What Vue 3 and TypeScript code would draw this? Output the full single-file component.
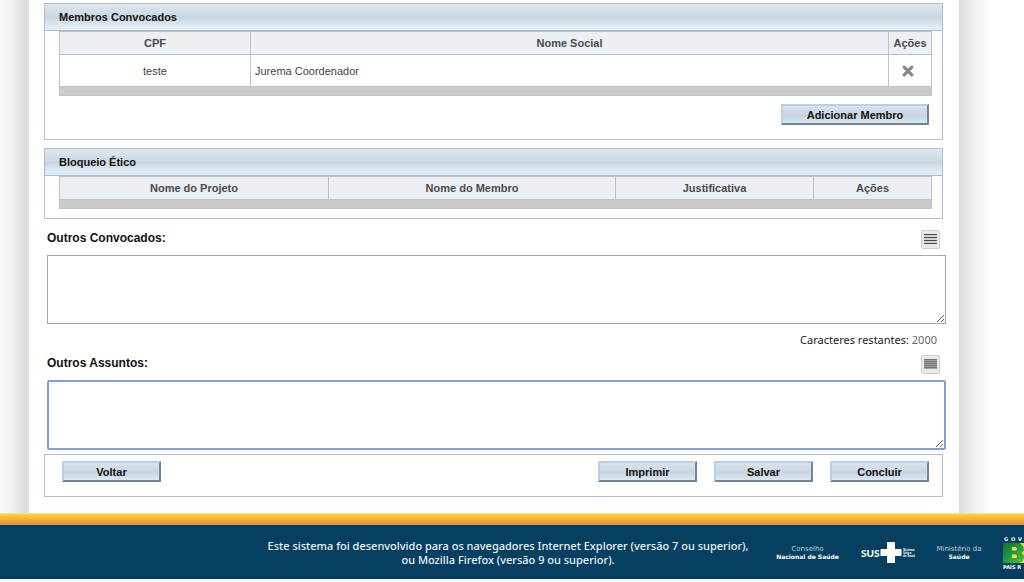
<script setup lang="ts">
import { ref } from 'vue'

interface Member {
  cpf: string
  name: string
}

const members = ref<Member[]>([{ cpf: 'teste', name: 'Jurema Coordenador' }])
const others = ref('')
const subjects = ref('')
const limit = 2000

function removeMember(index: number): void {
  members.value.splice(index, 1)
}
</script>

<template>
  <div class="screen">
    <div class="body-row">
      <div class="edge edge-left"></div>
      <main class="page">
        <section class="panel">
          <h2 class="panel-title">Membros Convocados</h2>
          <div class="panel-body members-body">
            <table class="grid">
              <colgroup>
                <col class="c-cpf" />
                <col />
                <col class="c-act" />
              </colgroup>
              <thead>
                <tr>
                  <th scope="col">CPF</th>
                  <th scope="col">Nome Social</th>
                  <th scope="col">Ações</th>
                </tr>
              </thead>
              <tbody>
                <tr v-for="(m, i) in members" :key="m.cpf">
                  <td class="center">{{ m.cpf }}</td>
                  <td>{{ m.name }}</td>
                  <td class="remove-cell">
                    <button class="remove" type="button" aria-label="Remover" @click="removeMember(i)">
                      <svg width="12" height="12" viewBox="0 0 12 12">
                        <path d="M2.2 2.2 L9.8 9.8 M9.8 2.2 L2.2 9.8" stroke="#858585" stroke-width="3.2" stroke-linecap="round" />
                      </svg>
                    </button>
                  </td>
                </tr>
              </tbody>
              <tfoot>
                <tr><td colspan="3"></td></tr>
              </tfoot>
            </table>
            <div class="panel-actions">
              <button class="btn wide" type="button">Adicionar Membro</button>
            </div>
          </div>
        </section>

        <section class="panel">
          <h2 class="panel-title">Bloqueio Ético</h2>
          <div class="panel-body ethics-body">
            <table class="grid">
              <colgroup>
                <col class="c-proj" />
                <col />
                <col class="c-just" />
                <col class="c-lock" />
              </colgroup>
              <thead>
                <tr>
                  <th scope="col">Nome do Projeto</th>
                  <th scope="col">Nome do Membro</th>
                  <th scope="col">Justificativa</th>
                  <th scope="col">Ações</th>
                </tr>
              </thead>
              <tfoot>
                <tr><td colspan="4"></td></tr>
              </tfoot>
            </table>
          </div>
        </section>

        <div class="field">
          <div class="field-head">
            <label for="others">Outros Convocados:</label>
            <button class="expand" type="button" aria-label="Expandir">
              <svg width="13" height="10" viewBox="0 0 13 10">
                <path d="M0 .5H13M0 3.5H13M0 6.5H13M0 9.5H13" stroke="#484848" />
                <path d="M0 2H13M0 5H13M0 8H13" stroke="#bdbdbd" />
              </svg>
            </button>
          </div>
          <textarea id="others" v-model="others" :maxlength="limit"></textarea>
          <p class="counter">Caracteres restantes: <span>{{ limit - others.length }}</span></p>
        </div>

        <div class="field">
          <div class="field-head">
            <label for="subjects">Outros Assuntos:</label>
            <button class="expand" type="button" aria-label="Expandir">
              <svg width="13" height="10" viewBox="0 0 13 10">
                <rect width="13" height="10" fill="#a5a5a5" />
                <path d="M0 .5H13M0 2.5H13M0 4.5H13M0 6.5H13M0 8.5H13" stroke="#717171" />
              </svg>
            </button>
          </div>
          <textarea id="subjects" v-model="subjects" class="active" :maxlength="limit"></textarea>
        </div>

        <div class="actions">
          <button class="btn back" type="button">Voltar</button>
          <button class="btn" type="button">Imprimir</button>
          <button class="btn" type="button">Salvar</button>
          <button class="btn" type="button">Concluir</button>
        </div>
      </main>
      <div class="edge edge-right"></div>
    </div>

    <div class="stripe"></div>
    <footer class="footer">
      <p class="notice">
        Este sistema foi desenvolvido para os navegadores Internet Explorer (versão 7 ou superior),<br />
        ou Mozilla Firefox (versão 9 ou superior).
      </p>
      <div class="logos">
        <div class="org council">Conselho<strong>Nacional de Saúde</strong></div>
        <svg class="sus" width="54" height="22" viewBox="0 0 54 22">
          <text x="0" y="15" class="sus-name">SUS</text>
          <path d="M26 0H34V7H40.500V14H34V21H26V14H19.500V7H26Z" fill="#fff" />
          <text x="42" y="9" class="sus-small">Sistema</text>
          <text x="42" y="12" class="sus-small">Único</text>
          <text x="42" y="15" class="sus-small">de Saúde</text>
        </svg>
        <div class="org ministry">Ministério da<strong>Saúde</strong></div>
        <svg class="gov" width="21" height="34" viewBox="0 0 21 34">
          <defs>
            <linearGradient id="leaf" x1="0" x2="1" y1="0" y2="1">
              <stop offset="0" stop-color="#18702f" />
              <stop offset=".5" stop-color="#239846" />
              <stop offset="1" stop-color="#61bd36" />
            </linearGradient>
          </defs>
          <text x="1" y="5" class="gov-small">G</text>
          <text x="8" y="5" class="gov-small">O</text>
          <text x="15" y="5" class="gov-small">V</text>
          <rect x="0" y="7" width="21" height="20" fill="url(#leaf)" />
          <path d="M9 11H12Q14 11 14 13Q14 14.500 12 14.500H9ZM9 18.500H12.500Q14 18.500 14 20.500Q14 22 12.500 22H9Z" fill="#f4e52c" />
          <path d="M17 7H21V13Q20 9 17 7ZM18.500 17L21 14.500V19.500ZM21 22V27H17Q20 25.500 21 22Z" fill="#dfe02e" />
          <text x="0" y="33" class="gov-small">PAÍS R</text>
        </svg>
      </div>
    </footer>
  </div>
</template>

<style>
body {
  margin: 0;
  background: #fff;
  overflow: hidden;
}
</style>

<style scoped>
.screen {
  font-family: "Liberation Sans", Arial, sans-serif;
  font-size: 11px;
  color: #444;
  overflow: hidden;
}
.body-row {
  display: grid;
  grid-template-columns: 29px 1fr 65px;
}
.edge-left {
  background: linear-gradient(to right, #fafafa, #f1f1f1 40%, #dcdcdc 90%, #e2e2e2);
}
.edge-right {
  background: linear-gradient(to right, #dadada, #efefef 20%, #fbfbfb 42%, #fff 55%);
}
.page {
  padding: 3px 16px 16px 15px;
  min-width: 0;
}
.panel {
  border: 1px solid #b0c0cf;
  margin-bottom: 8px;
}
.panel-title {
  margin: 0;
  padding-left: 14px;
  font-size: 11px;
  line-height: 26px;
  color: #111;
  border-bottom: 1px solid #abbccb;
  background: linear-gradient(#dfe7ee, #cfd9e2 45%, #c6d5e1 50%, #dfebf5 85%, #e3eef7);
}
.panel-body {
  padding: 0 10px 0 14px;
}
.members-body {
  padding-bottom: 14px;
}
.ethics-body {
  padding-bottom: 9px;
}
.grid {
  width: 100%;
  table-layout: fixed;
  border-collapse: collapse;
}
.c-cpf { width: 191px; }
.c-act { width: 43px; }
.c-proj { width: 269px; }
.c-just { width: 198px; }
.c-lock { width: 118px; }
.grid th {
  height: 22px;
  padding: 0;
  font-size: 11px;
  color: #4a4a4a;
  background: #ecf0f3;
  border: 1px solid #bdc1c5;
}
.grid td {
  height: 31px;
  padding: 0 4px;
  border: 1px solid #c4c4c4;
}
.grid .center {
  text-align: center;
}
.grid tfoot td {
  height: 8px;
  padding: 0;
  background: #cbcbcb;
}
.grid .remove-cell {
  padding: 0 4px 0 0;
  text-align: center;
}
.remove {
  display: block;
  margin: 0 auto;
  padding: 0;
  border: 0;
  background: none;
}
.remove svg {
  display: block;
}
.panel-actions {
  display: flex;
  justify-content: flex-end;
  padding: 8px 3px 0 0;
}
.btn {
  width: 99px;
  height: 21px;
  padding: 0;
  font-family: inherit;
  font-size: 11px;
  font-weight: bold;
  color: #111;
  background: linear-gradient(#d9e3ec, #ccd8e2 48%, #c6d4e0 52%, #dbe7f2);
  border: 2px solid;
  border-color: #b5d0ee #70849a #70849a #b5d0ee;
}
.wide {
  width: 148px;
}
.field {
  margin: 0 -3px 0 3px;
}
.field-head {
  display: flex;
  justify-content: space-between;
  height: 26px;
  padding: 2px 6px 0 0;
}
.field-head label {
  font-size: 12px;
  font-weight: bold;
  line-height: 18px;
  color: #111;
}
.expand {
  display: flex;
  align-items: center;
  justify-content: center;
  width: 19px;
  height: 19px;
  padding: 0 0 1px;
  margin-top: 1px;
  border: 1px solid #cfcfcf;
  border-radius: 2px;
  background: #e9e9e9;
}
textarea {
  display: block;
  box-sizing: border-box;
  width: 100%;
  height: 69px;
  margin: 0;
  border: 1px solid #a6a6a6;
  background: #fff;
}
textarea.active {
  height: 70px;
  border: 2px solid #7f9fe0;
  border-radius: 2px;
}
.counter {
  margin: 0;
  padding: 7px 9px 3px 0;
  font-family: "Noto Sans", "Open Sans", sans-serif;
  font-size: 11px;
  line-height: 18px;
  text-align: right;
  color: #222;
}
.counter span {
  color: #666;
}
.actions {
  display: flex;
  gap: 17px;
  margin-top: 4px;
  padding: 6px 13px 14px 17px;
  border: 1px solid #b0c0cf;
}
.back {
  margin-right: auto;
}
.stripe {
  height: 12px;
  background: linear-gradient(#fbe9a0, #f8cf3a 15%, #f9b02e 55%, #f2902f 85%, #a9a69a);
}
.footer {
  display: flex;
  align-items: center;
  box-sizing: border-box;
  height: 54px;
  padding-top: 2px;
  background: #073f60;
  color: #e9f2f7;
}
.notice {
  flex: 1;
  margin: 0 0 0 242px;
  font-family: "Noto Sans", "Open Sans", sans-serif;
  font-size: 11px;
  font-weight: 500;
  line-height: 14px;
  text-align: center;
  white-space: nowrap;
}
.logos {
  display: flex;
  align-items: center;
  gap: 20px;
}
.org {
  font-family: "DejaVu Sans", sans-serif;
  font-size: 7px;
  line-height: 8px;
  text-align: center;
  white-space: nowrap;
  color: #bdd0db;
}
.org strong {
  display: block;
  font-size: 6px;
  color: #fff;
}
.council {
  width: 67px;
}
.ministry {
  width: 48px;
}
.sus-name {
  font: 900 10px Lato, sans-serif;
  fill: #fff;
}
.sus-small {
  font: bold 3px "Liberation Sans", sans-serif;
  fill: #fff;
}
.gov-small {
  font: bold 5px "DejaVu Sans", sans-serif;
  fill: #fff;
}
</style>
